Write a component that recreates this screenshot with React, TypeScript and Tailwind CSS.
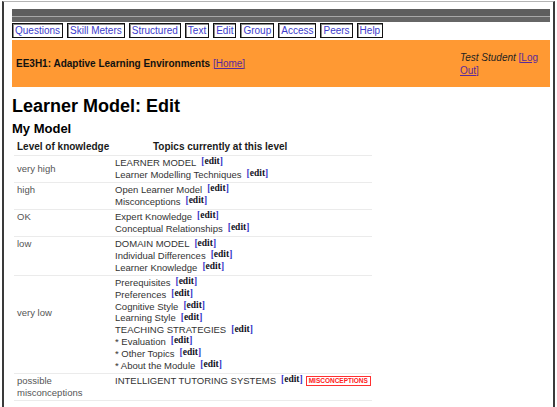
import React from "react";

function Edit() {
  return (
    <span className="ml-[5px] font-['Liberation_Serif',serif] font-bold text-[9.5px] leading-[0] align-[1.5px]">
      <span className="text-[#3434c8]">[</span>
      <span className="text-[#111122]">edit</span>
      <span className="text-[#3434c8]">]</span>
    </span>
  );
}

type Row = { level: string; pt?: string; items: string[]; badge?: boolean };

const rows: Row[] = [
  { level: "very high", pt: "pt-[6px]", items: ["LEARNER MODEL", "Learner Modelling Techniques"] },
  { level: "high", items: ["Open Learner Model", "Misconceptions"] },
  { level: "OK", items: ["Expert Knowledge", "Conceptual Relationships"] },
  { level: "low", items: ["DOMAIN MODEL", "Individual Differences", "Learner Knowledge"] },
  {
    level: "very low",
    pt: "pt-[30px]",
    items: [
      "Prerequisites",
      "Preferences",
      "Cognitive Style",
      "Learning Style",
      "TEACHING STRATEGIES",
      "* Evaluation",
      "* Other Topics",
      "* About the Module",
    ],
  },
  { level: "possible misconceptions", items: ["INTELLIGENT TUTORING SYSTEMS"], badge: true },
];

const tabs = ["Questions", "Skill Meters", "Structured", "Text", "Edit", "Group", "Access", "Peers", "Help"];

export default function App() {
  return (
    <div className="w-[557px] h-[407px] overflow-hidden bg-white font-['Liberation_Sans',Arial,sans-serif]">
      <div className="ml-[2px] mr-[2px] mt-[1px] h-[406px] border-t border-t-[#b4b4b4] border-l-2 border-r-2 border-l-[#3a3a3a] border-r-[#3a3a3a] pl-[8px] pr-[3px] pt-[7px]">
        <div className="flex flex-col">
          <div className="h-[7px] bg-[#5e5e5e]" />
          <div className="h-[1px] bg-[#a8a8a8]" />
          <div className="h-[5px] bg-[#666666]" />
        </div>

        <div className="mt-[1px] flex gap-[4px]">
          {tabs.map((t) => (
            <div
              key={t}
              className="border border-[#111] shadow-[inset_1px_1px_0_#8a8a8a] bg-white px-[2px] text-[10px] leading-[13px] text-[#3c3ccc]"
            >
              {t}
            </div>
          ))}
        </div>

        <div className="mt-[2px] h-[47px] bg-[#ff9933] flex items-center justify-between">
          <div className="pl-[4px] text-[10px] leading-[12px] text-[#111]">
            <span className="font-bold">EE3H1: Adaptive Learning Environments</span>{" "}
            <span className="underline text-[#5a2a9a]">[Home]</span>
          </div>
          <div className="w-[82px] mr-[8px] italic text-[10px] leading-[13px] text-[#222]">
            Test Student <span className="underline not-italic text-[#5a2a9a]">[Log Out]</span>
          </div>
        </div>

        <h1 className="mt-[8px] text-[18px] leading-[22px] font-bold text-black">Learner Model: Edit</h1>
        <h2 className="mt-[4px] text-[13px] leading-[16px] font-bold text-black">My Model</h2>

        <div className="mt-[1.5px] ml-[2px] w-[358px]">
          <div className="grid grid-cols-[99px_1fr] border-b border-[#ebebeb] py-[2px] text-[10px] leading-[12px] font-bold text-[#1a1a1a]">
            <div className="pl-[3px]">Level of knowledge</div>
            <div className="pl-[40px]">Topics currently at this level</div>
          </div>
          {rows.map((r) => (
            <div
              key={r.level}
              className="grid grid-cols-[99px_1fr] border-b border-[#ebebeb] py-[1.25px] text-[9.5px] leading-[11.8px]"
            >
              <div className={`pl-[3px] pr-[2px] text-[#555] ${r.pt ?? ""}`}>{r.level}</div>
              <div className="pl-[2px] text-[#333]">
                {r.items.map((it) => (
                  <div key={it} className="h-[11.8px] whitespace-nowrap">
                    {it}
                    <Edit />
                    {r.badge && (
                      <span className="ml-[3px] inline-block border border-[#ff3030] px-[2px] text-[6.5px] leading-[8px] font-bold text-[#ff2020] align-[1px]">
                        MISCONCEPTIONS
                      </span>
                    )}
                  </div>
                ))}
              </div>
            </div>
          ))}
        </div>
      </div>
    </div>
  );
}
